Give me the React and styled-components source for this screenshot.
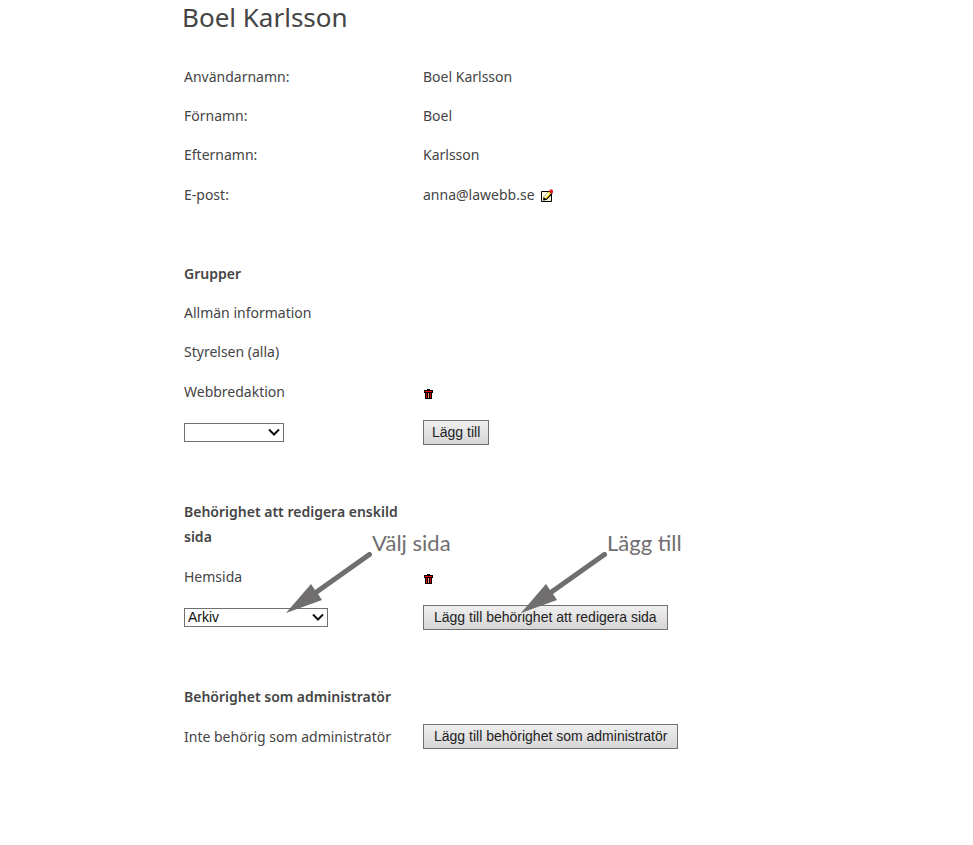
import React from "react";
import styled, { createGlobalStyle } from "styled-components";

const GlobalStyle = createGlobalStyle`
  body {
    margin: 0;
    background: #fff;
    color: #444;
    font-family: "Noto Sans", "Open Sans", sans-serif;
    font-size: 14px;
    line-height: 25px;
  }
`;

// Layout
const Page = styled.main`
  max-width: 609px;
  margin: 0 auto;
  padding-bottom: 40px;
`;

const Title = styled.h1`
  margin: 0 0 23px;
  font-size: 26px;
  font-weight: normal;
  line-height: 34px;
`;

const Section = styled.section`
  margin-bottom: 39px;
  padding: 0 2px;
`;

const Row = styled.div`
  display: grid;
  grid-template-columns: 224px 1fr;
  column-gap: 15px;
  align-items: center;
  min-height: ${(props) => (props.$control ? "41px" : "39px")};
`;

const Cell = styled.div`
  position: relative;
  display: flex;
  align-items: center;
  gap: 6px;
  min-height: 25px;
`;

const SectionHeading = styled.h2`
  margin: 0;
  padding: 7px 0;
  font-size: 14px;
  font-weight: 600;
  line-height: 25px;
`;

// Controls
const Button = styled.button`
  height: 25px;
  padding: 0 ${(props) => (props.$wide ? "10px" : "8px")};
  border: 1px solid #707070;
  background: linear-gradient(#efefef, #d6d6d6);
  color: #222;
  font-family: "Liberation Sans", Arial, sans-serif;
  font-size: 14px;
  line-height: 23px;
  white-space: nowrap;
`;

const IconButton = styled.button`
  display: flex;
  align-items: flex-end;
  height: 15px;
  padding: 0;
  border: 0;
  background: none;
`;

const SelectBox = styled.div`
  position: relative;
  display: flex;
  width: ${(props) => props.$width};
`;

const Select = styled.select`
  appearance: none;
  width: 100%;
  height: 19px;
  padding: 0 20px 0 3px;
  border: 1px solid #707070;
  border-radius: 0;
  background: #fff;
  color: #111;
  font-family: "Liberation Sans", Arial, sans-serif;
  font-size: 14px;
  line-height: 17px;
`;

const Chevron = styled.svg`
  position: absolute;
  top: 5px;
  right: 4px;
  pointer-events: none;
`;

// Notes that lie over the form
const Note = styled.div`
  position: absolute;
  left: ${(props) => props.$left};
  bottom: 16px;
  display: flex;
  align-items: flex-start;
  color: #706e6f;
  font-family: Lato, sans-serif;
  font-size: 22px;
  line-height: 24px;
  white-space: nowrap;
  pointer-events: none;
`;

const Arrow = styled.svg`
  flex-shrink: 0;
  margin-top: 21px;
`;

function TrashIcon() {
  return (
    <svg width="10" height="10" viewBox="-1 0 10 10" aria-hidden="true">
      <path fill="#000" d="M3 0h3v1h3v3h-1v6h-7v-6h-1v-3h3z" />
      <path fill="#f00" d="M1 2h7v1h-7z" />
      <path fill="#d00000" d="M2 4h1v5h-1zM6 4h1v5h-1z" />
      <path fill="#ff9a9a" d="M4 4h1v5h-1z" />
    </svg>
  );
}

function EditIcon() {
  return (
    <svg width="12" height="13" aria-hidden="true">
      <path fill="#fff8d8" stroke="#000" d="M.5 2.5h10v10h-10z" />
      <path fill="#000" d="M2 11.5L2.5 8L8 2L11.5 5L5.500 11z" />
      <path fill="#ffe93b" d="M3 8L8 2.500L10 4.500L5 10z" />
      <path fill="#fff" d="M3 8L7 3.500L8 4.500L4 9z" />
      <path fill="#e8192c" d="M8 2l1-1.500h2l1 1v2l-1.500 1.500z" />
    </svg>
  );
}

function Dropdown({ label, width, children }) {
  return (
    <SelectBox $width={width}>
      <Select aria-label={label}>{children}</Select>
      <Chevron width="12" height="9">
        <path d="M1 1.5L6 6.5L11 1.5" fill="none" stroke="#111" strokeWidth="2" />
      </Chevron>
    </SelectBox>
  );
}

function ArrowNote({ left, children }) {
  return (
    <Note $left={left}>
      <Arrow width="86" height="62" aria-hidden="true">
        <path fill="#706e6f" d="M0 61L25 32L29 38L84 -1L87 3L32 42L36 48z" />
      </Arrow>
      {children}
    </Note>
  );
}

function DeleteButton({ name }) {
  return (
    <IconButton type="button" aria-label={`Ta bort ${name}`}>
      <TrashIcon />
    </IconButton>
  );
}

export default function App() {
  const details = [
    ["Användarnamn:", "Boel Karlsson"],
    ["Förnamn:", "Boel"],
    ["Efternamn:", "Karlsson"],
  ];

  return (
    <>
      <GlobalStyle />
      <Page>
        <Title>Boel Karlsson</Title>
        <Section>
          {details.map(([label, value]) => (
            <Row key={label}>
              <Cell>{label}</Cell>
              <Cell>{value}</Cell>
            </Row>
          ))}
          <Row $control>
            <Cell>E-post:</Cell>
            <Cell>
              anna@lawebb.se
              <IconButton type="button" aria-label="Redigera e-post">
                <EditIcon />
              </IconButton>
            </Cell>
          </Row>
        </Section>

        <Section>
          <Row>
            <SectionHeading>Grupper</SectionHeading>
          </Row>
          <Row>
            <Cell>Allmän information</Cell>
          </Row>
          <Row>
            <Cell>Styrelsen (alla)</Cell>
          </Row>
          <Row $control>
            <Cell>Webbredaktion</Cell>
            <Cell>
              <DeleteButton name="Webbredaktion" />
            </Cell>
          </Row>
          <Row $control>
            <Cell>
              <Dropdown label="Grupp" width="100px">
                <option></option>
              </Dropdown>
            </Cell>
            <Cell>
              <Button type="button">Lägg till</Button>
            </Cell>
          </Row>
        </Section>

        <Section>
          <Row>
            <SectionHeading>Behörighet att redigera enskild sida</SectionHeading>
          </Row>
          <Row $control>
            <Cell>Hemsida</Cell>
            <Cell>
              <DeleteButton name="Hemsida" />
            </Cell>
          </Row>
          <Row $control>
            <Cell>
              <Dropdown label="Sida" width="144px">
                <option>Arkiv</option>
              </Dropdown>
              <ArrowNote left="102px">Välj sida</ArrowNote>
            </Cell>
            <Cell>
              <Button type="button" $wide>
                Lägg till behörighet att redigera sida
              </Button>
              <ArrowNote left="98px">Lägg till</ArrowNote>
            </Cell>
          </Row>
        </Section>

        <Section>
          <Row>
            <SectionHeading>Behörighet som administratör</SectionHeading>
          </Row>
          <Row $control>
            <Cell>Inte behörig som administratör</Cell>
            <Cell>
              <Button type="button" $wide>
                Lägg till behörighet som administratör
              </Button>
            </Cell>
          </Row>
        </Section>
      </Page>
    </>
  );
}
